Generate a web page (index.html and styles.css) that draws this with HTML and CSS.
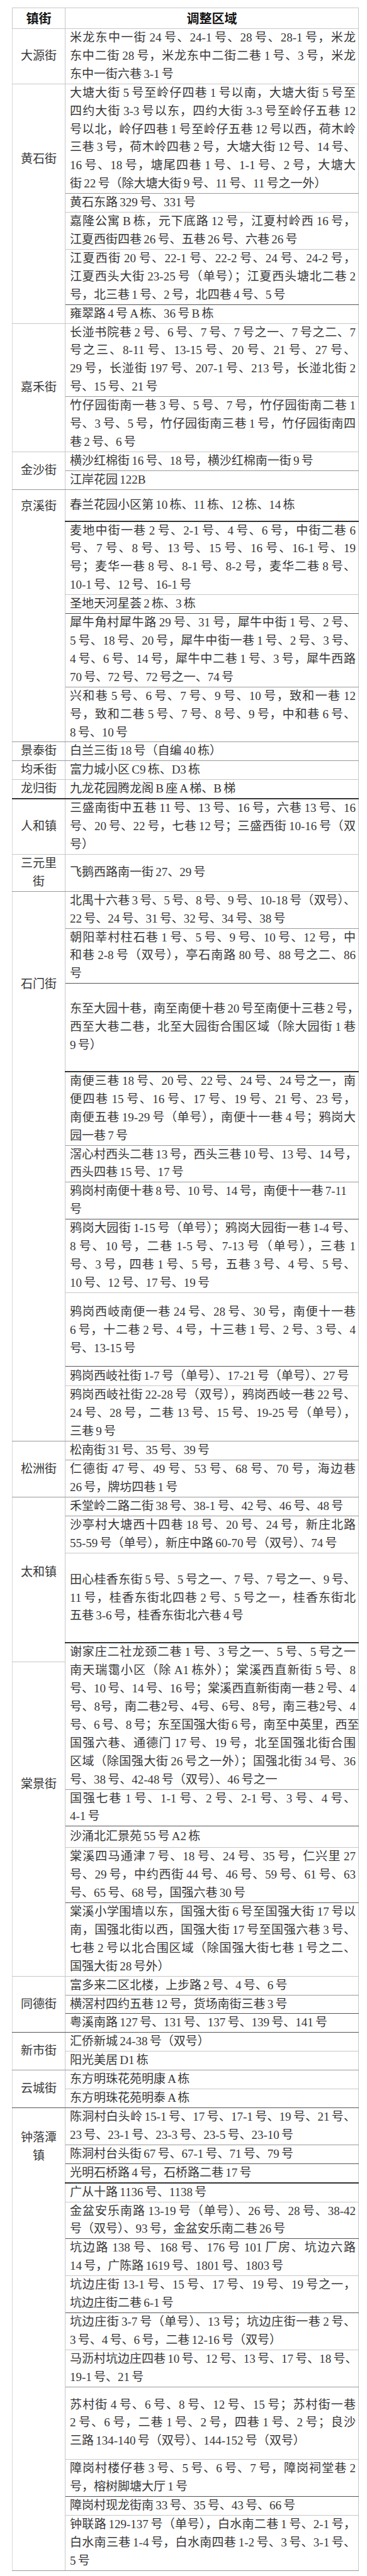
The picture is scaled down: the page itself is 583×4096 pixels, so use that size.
FILE: index.html
```html
<!DOCTYPE html>
<html lang="zh-CN">
<head>
<meta charset="utf-8">
<title>调整区域</title>
<link rel="stylesheet" href="styles.css">
</head>
<body>
<table class="tbl">
<colgroup><col class="c1"><col class="c2"></colgroup>
<thead>
<tr><th>镇街</th><th>调整区域</th></tr>
</thead>
<tbody>
<tr><td class="lab">大源街</td><td class="c"><span class="j">米龙东中一街 24 号、24-1 号、28 号、28-1 号，米龙</span><span class="j">东中二街 28 号，米龙东中二街二巷 1 号、3 号，米龙</span>东中一街六巷 3-1 号</td></tr>

<tr><td class="lab lt hs" rowspan="5">黄石街</td><td class="c m"><span class="j">大塘大街 5 号至岭仔四巷 1 号以南，大塘大街 5 号至</span><span class="j">四约大街 3-3 号以东，四约大街 3-3 号至岭仔五巷 12</span><span class="j">号以北，岭仔四巷 1 号至岭仔五巷 12 号以西，荷木岭</span><span class="j">三巷 3 号，荷木岭四巷 2 号，大塘大街 12 号、14 号、</span><span class="j">16 号、18 号，塘尾四巷 1 号、1-1 号、2 号，大塘大</span>街 22 号（除大塘大街 9 号、11 号、11 号之一外）</td></tr>
<tr><td class="c">黄石东路 329 号、331 号</td></tr>
<tr><td class="c"><span class="j">嘉隆公寓 B 栋，元下底路 12 号，江夏村岭西 16 号，</span>江夏西街四巷 26 号、五巷 26 号、六巷 26 号</td></tr>
<tr><td class="c d"><span class="j">江夏西街 20 号、22-1 号、22-2 号、24 号、24-2 号，</span><span class="j">江夏西头大街 23-25 号（单号）；江夏西头塘北二巷 2</span>号，北三巷 1 号、2 号，北四巷 4 号、5 号</td></tr>
<tr><td class="c">雍翠路 4 号 A 栋、36 号 B 栋</td></tr>

<tr><td class="lab" rowspan="2">嘉禾街</td><td class="c m"><span class="j">长湴书院巷 2 号、6 号、7 号、7 号之一、7 号之二、7</span><span class="j">号之三、8-11 号、13-15 号、20 号、21 号、27 号、</span><span class="j">29 号，长湴街 197 号、207-1 号、213 号，长湴北街 2</span>号、15 号、21 号</td></tr>
<tr><td class="c"><span class="j">竹仔园街南一巷 3 号、5 号、7 号，竹仔园街南二巷 1</span><span class="j">号、3 号、5 号，竹仔园街南三巷 1 号，竹仔园街南四</span>巷 2 号、6 号</td></tr>

<tr><td class="lab m" rowspan="2">金沙街</td><td class="c m">横沙红棉街 16 号、18 号，横沙红棉南一街 9 号</td></tr>
<tr><td class="c m">江岸花园 122B</td></tr>

<tr><td class="lab lt jx m" rowspan="5">京溪街</td><td class="c p10 dd">春兰花园小区第 10 栋、11 栋、12 栋、14 栋</td></tr>
<tr><td class="c"><span class="j">麦地中街一巷 2 号、2-1 号、4 号、6 号，中街二巷 6</span><span class="j">号、7 号、8 号、13 号、15 号、16 号、16-1 号、19</span><span class="j">号；麦华一巷 8 号、8-1 号、8-2 号，麦华二巷 8 号、</span>10-1 号、12 号、16-1 号</td></tr>
<tr><td class="c d">圣地天河星荟 2 栋、3 栋</td></tr>
<tr><td class="c m"><span class="j">犀牛角村犀牛路 29 号、31 号，犀牛中街 1 号、2 号、</span><span class="j">5 号、18 号、20 号，犀牛中街一巷 1 号、2 号、3 号、</span><span class="j">4 号、6 号、14 号，犀牛中二巷 1 号、3 号，犀牛西路</span>70 号、72 号、72 号之一、74 号</td></tr>
<tr><td class="c m"><span class="j">兴和巷 5 号、6 号、7 号、9 号、10 号，致和一巷 12</span><span class="j">号，致和二巷 5 号、7 号、8 号、9 号，中和巷 6 号、</span>8 号、10 号</td></tr>

<tr><td class="lab m">景泰街</td><td class="c m">白兰三街 18 号（自编 40 栋）</td></tr>
<tr><td class="lab">均禾街</td><td class="c">富力城小区 C9 栋、D3 栋</td></tr>
<tr><td class="lab dd">龙归街</td><td class="c dd">九龙花园腾龙阁 B 座 A 梯、B 梯</td></tr>
<tr><td class="lab">人和镇</td><td class="c"><span class="j">三盛南街中五巷 11 号、13 号、16 号，六巷 13 号、16</span><span class="j">号、20 号、22 号，七巷 12 号；三盛西街 10-16 号（双</span>号）</td></tr>
<tr><td class="lab m">三元里街</td><td class="c m">飞鹅西路南一街 27、29 号</td></tr>

<tr><td class="lab lt sm m" rowspan="10">石门街</td><td class="c m"><span class="j">北禺十六巷 3 号、5 号、8 号、9 号、10-18 号（双号）、</span>22 号、24 号、31 号、32 号、34 号、38 号</td></tr>
<tr><td class="c d"><span class="j">朝阳莘村柱石巷 1 号、5 号、9 号、10 号、12 号，中</span><span class="j">和巷 2-8 号（双号），亭石南路 80 号、88 号之二、86</span>号</td></tr>
<tr><td class="c p27 dd"><span class="j">东至大园十巷，南至南便十巷 20 号至南便十三巷 2 号，</span><span class="j">西至大巷二巷，北至大园街合围区域（除大园街 1 巷</span>9 号）</td></tr>
<tr><td class="c m"><span class="j">南便三巷 18 号、20 号、22 号、24 号、24 号之一，南</span><span class="j">便四巷 15 号、16 号、17 号、19 号、21 号、23 号，</span><span class="j">南便五巷 19-29 号（单号），南便十一巷 4 号；鸦岗大</span>园一巷 7 号</td></tr>
<tr><td class="c m"><span class="j">滘心村西头二巷 13 号，西头三巷 10 号、13 号、14 号，</span>西头四巷 15 号、17 号</td></tr>
<tr><td class="c d">鸦岗村南便十巷 8 号、10 号、14 号，南便十一巷 7-11 号</td></tr>
<tr><td class="c"><span class="j">鸦岗大园街 1-15 号（单号）；鸦岗大园街一巷 1-4 号、</span><span class="j">8 号、10 号，二巷 1-5 号、7-13 号（单号），三巷 1</span><span class="j">号、3 号，四巷 1 号、5 号，五巷 3 号、4 号、5 号、</span>10 号、12 号、17 号、19 号</td></tr>
<tr><td class="c pyq d"><span class="j">鸦岗西岐南便一巷 24 号、28 号、30 号，南便十一巷</span><span class="j">6 号，十二巷 2 号、4 号，十三巷 1 号、2 号、3 号、4</span>号、13-15 号</td></tr>
<tr><td class="c p1">鸦岗西岐社街 1-7 号（单号）、17-21 号（单号）、27 号</td></tr>
<tr><td class="c m"><span class="j">鸦岗西岐社街 22-28 号（双号），鸦岗西岐一巷 22 号、</span><span class="j">24 号、28 号，二巷 13 号、15 号、19-25 号（单号），</span>三巷 9 号</td></tr>

<tr><td class="lab m" rowspan="2">松洲街</td><td class="c m">松南街 31 号、35 号、39 号</td></tr>
<tr><td class="c m"><span class="j">仁德街 47 号、49 号、53 号、68 号、70 号，海边巷</span>26 号，牌坊四巷 1 号</td></tr>

<tr><td class="lab lt th" rowspan="4">太和镇</td><td class="c m">禾堂岭二路二街 38 号、38-1 号、42 号、46 号、48 号</td></tr>
<tr><td class="c"><span class="j">沙亭村大塘西十四巷 18 号、20 号、24 号，新庄北路</span>55-59 号（单号），新庄中路 60-70 号（双号）、74 号</td></tr>
<tr><td class="c p28 dd"><span class="j">田心桂香东街 5 号、5 号之一、7 号、7 号之一、9 号、</span><span class="j">11 号，桂香东街北四巷 2 号、5 号之一，桂香东街北</span>五巷 3-6 号，桂香东街北六巷 4 号</td></tr>
<tr><td class="c nb"><span class="j">谢家庄二社龙颈二巷 1 号、3 号之一、5 号、5 号之一</span></td></tr>

<tr><td class="lab lt tj" rowspan="5">棠景街</td><td class="c nt m"><span class="j">南天瑞霭小区（除 A1 栋外）；棠溪西直新街 5 号、8</span><span class="j">号、10 号、14 号、16 号；棠溪西直新街南一巷 2 号、4</span><span class="j">号、8号，南二巷2号、4号、6号、8号，南三巷2号、4</span><span class="j">号、6 号、8 号；东至国强大街 6 号，南至中英里，西至</span><span class="j">国强六巷、通德门 17 号、19 号，北至国强北街合围</span><span class="j">区域（除国强大街 26 号之一外）；国强北街 34 号、36</span>号、38 号、42-48 号（双号）、46 号之一</td></tr>
<tr><td class="c d"><span class="j">国强七巷 1 号、1-1 号、2 号、2-1 号、3 号、4 号、</span>4-1 号</td></tr>
<tr><td class="c p2">沙涌北汇景苑 55 号 A2 栋</td></tr>
<tr><td class="c d"><span class="j">棠溪四马通津 7 号、18 号、24 号、35 号，仁兴里 27</span><span class="j">号、29 号，中约西街 44 号、46 号、59 号、61 号、63</span>号、65 号、68 号，国强六巷 30 号</td></tr>
<tr><td class="c"><span class="j">棠溪小学围墙以东，国强大街 6 号至国强大街 17 号以</span><span class="j">南，国强北街以西，国强大街 17 号至国强六巷 3 号、</span><span class="j">七巷 2 号以北合围区域（除国强大街七巷 1 号之二、</span>国强大街 28 号外）</td></tr>

<tr><td class="lab d" rowspan="3">同德街</td><td class="c m">富多来二区北楼，上步路 2 号、4 号、6 号</td></tr>
<tr><td class="c d">横滘村四约五巷 12 号，货场南街三巷 3 号</td></tr>
<tr><td class="c d">粤溪南路 127 号、131 号、137 号、139 号、141 号</td></tr>

<tr><td class="lab m" rowspan="2">新市街</td><td class="c">汇侨新城 24-38 号（双号）</td></tr>
<tr><td class="c m">阳光美居 D1 栋</td></tr>

<tr><td class="lab d" rowspan="2">云城街</td><td class="c">东方明珠花苑明康 A 栋</td></tr>
<tr><td class="c d">东方明珠花苑明泰 A 栋</td></tr>

<tr><td class="lab lt zl m" rowspan="13">钟落潭镇</td><td class="c m"><span class="j">陈洞村白头岭 15-1 号、17 号、17-1 号、19 号、21 号、</span>23 号、23-1 号、23-3 号、23-5 号、23-10 号</td></tr>
<tr><td class="c d">陈洞村台头街 67 号、67-1 号、71 号、79 号</td></tr>
<tr><td class="c dd">光明石桥路 4 号，石桥路二巷 17 号</td></tr>
<tr><td class="c">广从十路 1136 号、1138 号</td></tr>
<tr><td class="c d"><span class="j">金盆安乐南路 13-19 号（单号）、26 号、28 号、38-42</span>号（双号）、93 号，金盆安乐南二巷 26 号</td></tr>
<tr><td class="c"><span class="j">坑边路 138 号、168 号、176 号 101 厂房、坑边六路</span>14 号，广陈路 1619 号、1801 号、1803 号</td></tr>
<tr><td class="c d"><span class="j">坑边庄街 13-1 号、15 号、17 号、19 号、19 号之一，</span>坑边庄街二巷 6-1 号</td></tr>
<tr><td class="c"><span class="j">坑边庄街 3-7 号（单号）、13 号；坑边庄街一巷 2 号、</span>3 号、4 号、6 号，二巷 12-16 号（双号）</td></tr>
<tr><td class="c m"><span class="j">马沥村坑边庄四巷 10 号、12 号、13 号、17 号、18 号、</span>19-1 号、21 号</td></tr>
<tr><td class="c p14"><span class="j">苏村街 4 号、6 号、8 号、12 号、15 号；苏村街一巷</span><span class="j">2 号、6 号，二巷 1 号、2 号，四巷 1 号、2 号；良沙</span>三路 134-140 号（双号）、144-152 号（双号）</td></tr>
<tr><td class="c d"><span class="j">障岗村楼仔巷 3 号、5 号、6 号、7 号，障岗祠堂巷 2</span>号，榕树脚塘大厅 1 号</td></tr>
<tr><td class="c">障岗村现龙街南 33 号、35 号、43 号、66 号</td></tr>
<tr><td class="c m"><span class="j">钟联路 129-137 号（单号），白水南二巷 1 号、2-1 号，</span><span class="j">白水南三巷 1-4 号，白水南四巷 1-2 号、3 号、3-1 号、</span>5 号</td></tr>
</tbody>
</table>
</body>
</html>
```

FILE: styles.css
```css
html, body {
  margin: 0;
  padding: 0;
  background: #ffffff;
}

.tbl {
  border-collapse: collapse;
  table-layout: fixed;
  width: 550px;
  margin: 12px 0 0 19px;
  font-family: "Liberation Serif", "Noto Sans CJK SC", serif;
  font-size: 19px;
  line-height: 28.9px;
  color: #383838;
}

.c1 { width: 84px; }
.c2 { width: 466px; }

.tbl th {
  height: 32px;
  padding: 0;
  border: 1px solid #c8c8c8;
  font-family: "Noto Sans CJK SC", sans-serif;
  font-weight: 700;
  font-size: 20px;
  color: #151515;
  text-align: center;
  vertical-align: middle;
}

.tbl td {
  border: 1px solid #c8c8c8;
  padding: 0 4px 0 7px;
  vertical-align: middle;
  text-align: left;
}

.tbl td.lab {
  padding: 0 8px;
  text-align: center;
  border-left-color: #dadada;
}

.j {
  display: block;
  white-space: nowrap;
  word-spacing: -0.08em;
  text-align: justify;
  text-align-last: justify;
}

.c {
  word-spacing: -0.08em;
}

/* border weights */
.tbl td.m { border-bottom: 1px solid #9a9a9a; }
.tbl td.d { border-bottom: 1px solid #555555; }
.tbl td.dd { border-bottom: 2px solid #333333; }
.tbl td.nb { border-bottom: none; }
.tbl td.nt { border-top: none; }

/* label placement in tall merged cells */
.tbl td.lt { vertical-align: top; }
.tbl td.hs { padding-top: 105px; }
.tbl td.jx { padding-top: 12px; }
.tbl td.sm { padding-top: 133px; }
.tbl td.th { padding-top: 105px; }
.tbl td.tj { padding-top: 180px; }
.tbl td.zl { padding-top: 33px; }

/* rows with extra vertical room */
.tbl td.p1 { padding-top: 1px; padding-bottom: 1px; }
.tbl td.p2 { padding-top: 2px; padding-bottom: 2px; }
.tbl td.p10 { padding-top: 10px; padding-bottom: 10px; }
.tbl td.p14 { padding-top: 14px; padding-bottom: 14px; }
.tbl td.p27 { padding-top: 26px; padding-bottom: 26px; }
.tbl td.p28 { padding-top: 28px; padding-bottom: 27px; }
.tbl td.pyq { padding-top: 16px; padding-bottom: 13px; }
```
